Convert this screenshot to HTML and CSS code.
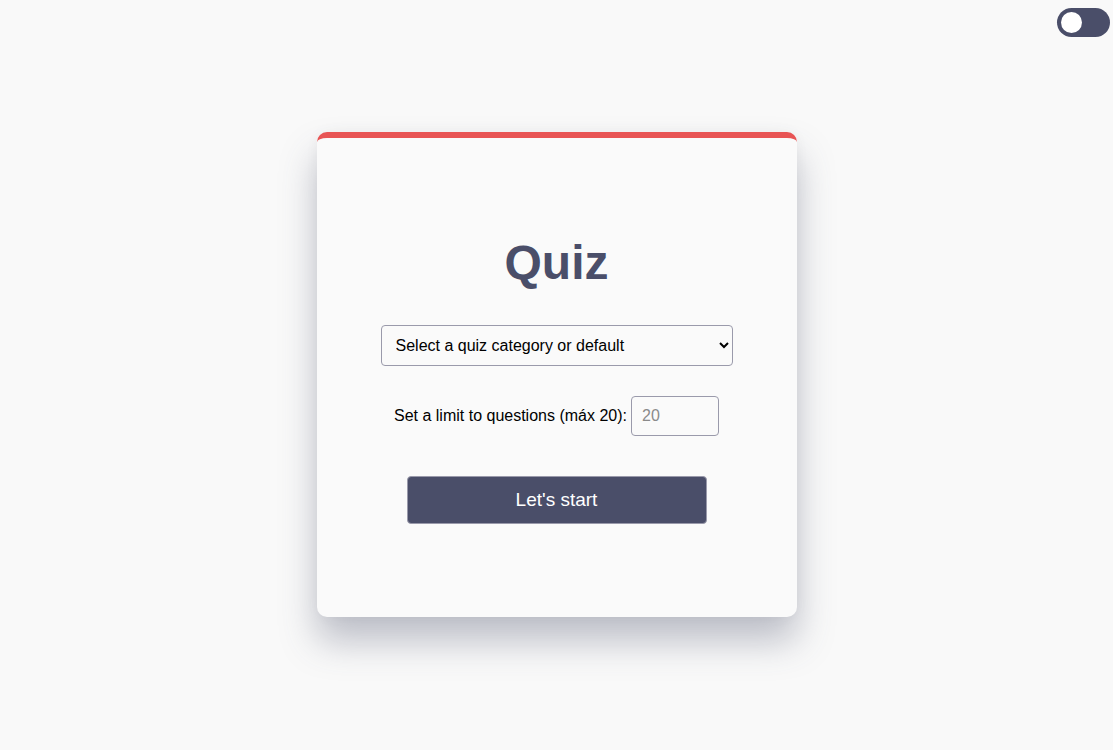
FILE: index.html
```html
<!DOCTYPE html>
<html lang="en">
<head>
<meta charset="utf-8">
<title>Quiz</title>
<link rel="stylesheet" href="styles.css">
</head>
<body>
<label class="theme-toggle">
  <input type="checkbox" class="theme-input">
  <span class="theme-track"><span class="theme-knob"></span></span>
</label>
<main class="page">
  <section class="card">
    <h1 class="title">Quiz</h1>
    <select class="category">
      <option>Select a quiz category or default</option>
    </select>
    <div class="limit-row">
      <label class="limit-label" for="limit">Set a limit to questions (máx 20):</label>
      <input id="limit" class="limit-input" type="number" placeholder="20">
    </div>
    <button class="start-btn" type="button">Let's start</button>
  </section>
</main>
</body>
</html>
```
FILE: styles.css
```css
* { box-sizing: border-box; }
html, body { margin: 0; padding: 0; }
body {
  background: #f9f9f9;
  font-family: "Liberation Sans", Arial, sans-serif;
  color: #000;
}
.page {
  min-height: 100vh;
  display: flex;
  align-items: center;
  justify-content: center;
  padding-bottom: 1px;
}
.theme-toggle {
  position: absolute;
  top: 8px;
  right: 3px;
  cursor: pointer;
}
.theme-input { display: none; }
.theme-track {
  display: block;
  width: 53px;
  height: 29px;
  border-radius: 15px;
  background: #4a4e69;
  position: relative;
}
.theme-knob {
  position: absolute;
  top: 4px;
  left: 4px;
  width: 21px;
  height: 21px;
  border-radius: 50%;
  background: #fff;
}
.card {
  width: 480px;
  background: #fafafa;
  border-top: 6px solid #e85454;
  border-radius: 10px;
  padding: 97px 0 93px;
  display: flex;
  flex-direction: column;
  align-items: center;
  box-shadow: 0 24px 36px rgba(74, 78, 105, 0.34), 0 0 14px rgba(0, 0, 0, 0.04);
}
.title {
  margin: 0;
  font-size: 48px;
  line-height: 56px;
  font-weight: 700;
  color: #4a4e69;
}
.category {
  margin-top: 34px;
  width: 352px;
  height: 41px;
  padding: 0 10px;
  font-family: inherit;
  font-size: 16px;
  color: #000;
  background: #fafafa;
  border: 1px solid #9a9aab;
  border-radius: 4px;
}
.limit-row {
  margin-top: 30px;
  display: flex;
  align-items: center;
  gap: 4px;
}
.limit-label {
  font-size: 16px;
}
.limit-input {
  width: 88px;
  height: 40px;
  padding: 0 10px;
  font-family: inherit;
  font-size: 16px;
  background: #fafafa;
  border: 1px solid #9a9aab;
  border-radius: 4px;
}
.limit-input::placeholder { color: #8a8a8a; }
.start-btn {
  margin-top: 40px;
  width: 300px;
  height: 48px;
  background: #4a4e69;
  color: #fff;
  border: 1px solid #9a9aab;
  border-radius: 4px;
  font-family: inherit;
  font-size: 19px;
  cursor: pointer;
}
```
